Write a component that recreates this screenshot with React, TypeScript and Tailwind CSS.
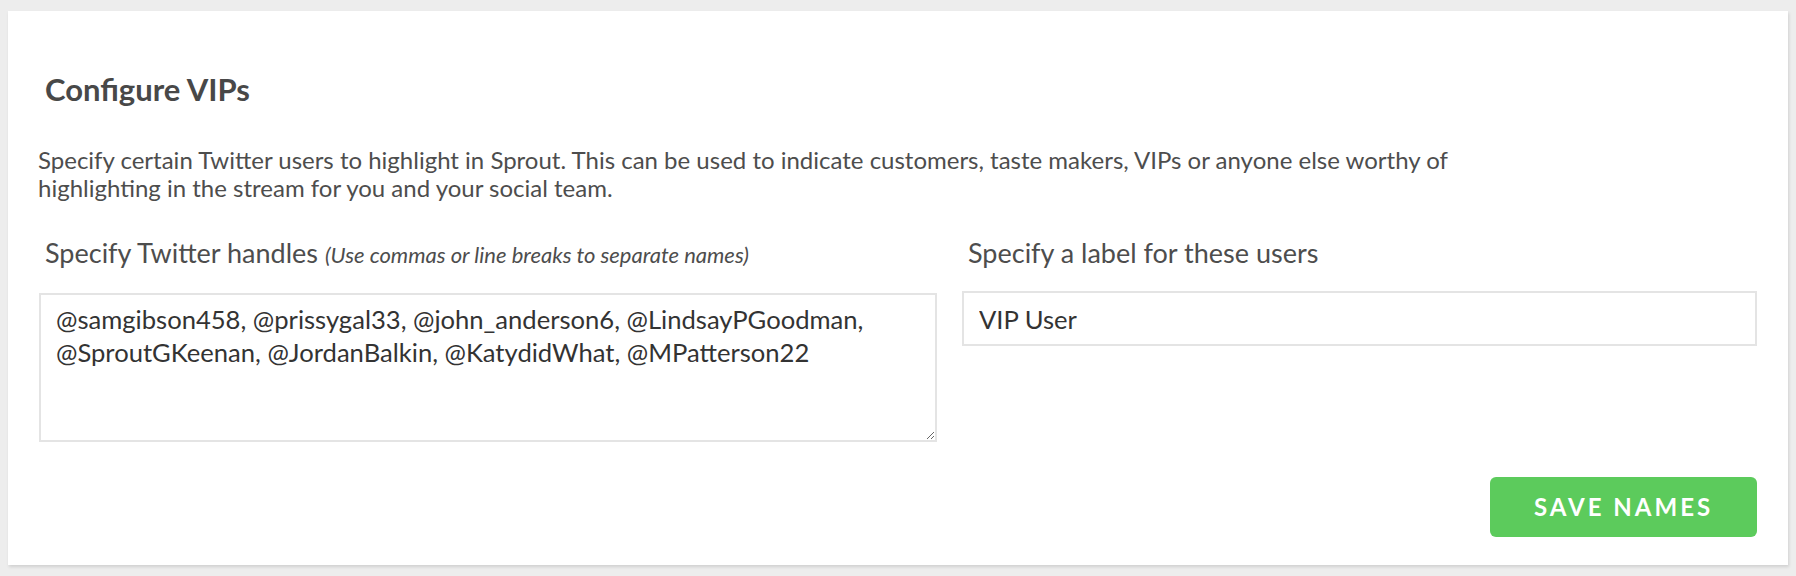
import React from "react";

export default function App() {
  const handles =
    "@samgibson458, @prissygal33, @john_anderson6, @LindsayPGoodman, @SproutGKeenan, @JordanBalkin, @KatydidWhat, @MPatterson22";
  return (
    <div
      className="min-h-[576px] w-full bg-[#ededed] pt-[11px] pl-[8px] pr-[8px] pb-[11px]"
      style={{ fontFamily: "Lato, 'Open Sans', sans-serif" }}
    >
      <div className="bg-white shadow-[1px_2px_3px_rgba(0,0,0,0.12)] px-[31px] pt-[58px] h-[554px]">
        <h2 className="text-[31px] font-bold text-[#484848] leading-[40px] pl-[6px]">
          Configure VIPs
        </h2>
        <p className="mt-[37px] text-[24px] leading-[27.5px] text-[#4d4d4d] -ml-[1px]">
          Specify certain Twitter users to highlight in Sprout. This can be used to indicate customers, taste makers, VIPs or anyone else worthy of
          <br />
          highlighting in the stream for you and your social team.
        </p>
        <div className="mt-[34px] flex gap-[25px]">
          <div className="w-[898px] flex flex-col">
            <label className="pl-[6px] text-[27px] leading-[36px] text-[#4d4d4d] whitespace-nowrap">
              Specify Twitter handles{" "}
              <span className="italic text-[22px]">(Use commas or line breaks to separate names)</span>
            </label>
            <textarea
              className="mt-[20px] h-[149px] w-full border-2 border-[#e4e4e4] px-[15px] pt-[8px] text-[25.6px] leading-[33px] text-[#333] outline-none resize-y"
              defaultValue={handles}
              style={{ fontFamily: "Lato, 'Open Sans', sans-serif" }}
            />
          </div>
          <div className="flex-1 flex flex-col">
            <label className="pl-[6px] text-[27px] leading-[36px] text-[#4d4d4d]">
              Specify a label for these users
            </label>
            <input
              className="mt-[20px] h-[55px] w-full border-2 border-[#e4e4e4] px-[15px] text-[25.6px] text-[#333] outline-none"
              defaultValue="VIP User"
              style={{ fontFamily: "Lato, 'Open Sans', sans-serif" }}
            />
          </div>
        </div>
        <div className="mt-[35px] flex justify-end">
          <button className="h-[60px] w-[267px] rounded-[6px] bg-[#5ccb5c] text-white text-[24px] font-bold tracking-[3px]">
            SAVE NAMES
          </button>
        </div>
      </div>
    </div>
  );
}
